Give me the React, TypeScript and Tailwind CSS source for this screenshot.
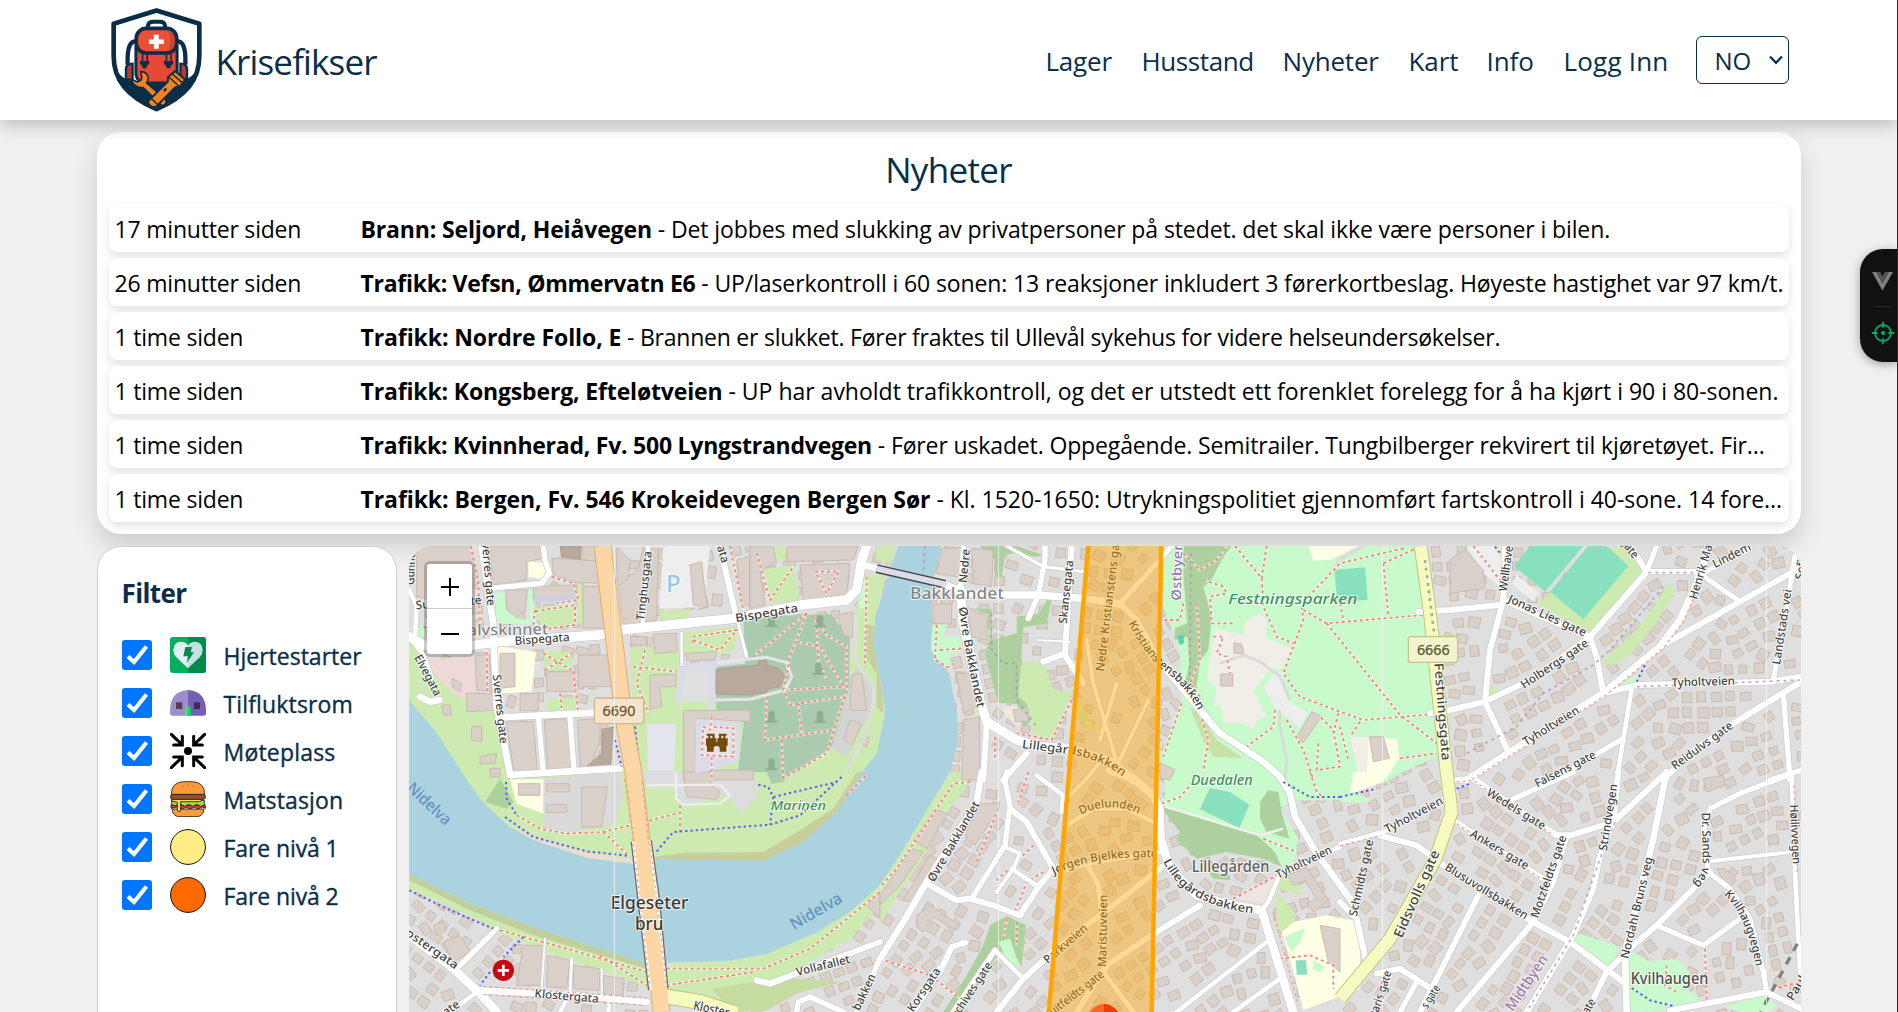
import React from "react";

/* ---------- Map data ---------- */

type Sheet = "A" | "B" | "C" | "D" | "E" | "F" | "G";

const ORIGIN: Record<Sheet, [number, number]> = {
  A: [400, 540],
  B: [750, 540],
  C: [1100, 540],
  D: [1450, 540],
  E: [400, 772],
  F: [880, 772],
  G: [1340, 772],
};

const place = (s: Sheet) => `translate(${ORIGIN[s][0]} ${ORIGIN[s][1]}) scale(0.33333)`;

const GRASS = "#cdebb0";
const PARK = "#c8facc";
const WOOD = "#add19e";
const PITCH = "#88e0be";
const YARD = "#ffffe5";
const PAVED = "#eeeeee";
const CEMETERY = "#aacbaf";
const LAND = "#e0dfdf";

const RIVER =
  "409,700 437,733 467,780 483,802 510,827 533,840 587,858 633,864 657,859 763,861 803,842 837,812 862,772 877,753 885,713 882,690 874,647 875,617 887,580 898,546 942,546 932,583 932,623 931,650 950,677 957,713 958,740 950,772 930,805 900,855 880,885 850,912 817,932 767,954 727,961 677,962 647,964 600,949 533,927 467,902 409,874";

const AREAS: [Sheet, string, string][] = [
  ["A", GRASS, "28,300 90,370 130,420 200,470 280,500 300,600 325,730 340,790 200,790 28,560"],
  ["A", "#efd9d8", "75,365 220,345 230,470 180,475 130,430"],
  ["A", PARK, "285,160 310,155 320,205 350,235 390,240 380,150 400,150 410,255 290,248"],
  ["A", GRASS, "400,205 520,190 532,250 430,268"],
  ["A", GRASS, "530,130 550,135 550,250 532,250"],
  ["A", YARD, "290,318 408,335 395,455 300,460"],
  ["A", YARD, "385,62 432,70 440,120 385,110"],
  ["A", PARK, "28,262 75,258 78,290 28,285"],
  ["A", GRASS, "430,335 515,335 515,390 435,390"],
  ["A", GRASS, "440,475 525,475 525,512 440,512"],
  ["A", PAVED, "790,18 930,18 912,200 778,206"],
  ["A", GRASS, "780,210 870,208 860,235 780,245"],
  ["A", GRASS, "690,320 735,320 750,520 745,720 720,720 700,560"],
  ["A", GRASS, "850,278 1020,255 1000,330 940,352 850,335"],
  ["A", GRASS, "740,320 850,340 840,520 820,730 740,730 745,530"],
  ["A", GRASS, "845,485 1050,485 1080,730 820,730"],
  ["A", CEMETERY, "945,380 1090,365 1090,520 950,520"],
  ["A", "#e4e4ec", "740,552 828,552 822,692 745,692"],
  ["A", "#dcdce8", "835,375 1040,350 1040,365 950,380 940,530 925,530 925,390 860,390 840,490 828,490"],
  ["B", GRASS, "345,105 410,100 375,230 372,320 395,450 405,520 380,640 330,725 60,725 130,700 240,625 330,500 300,380 320,200"],
  ["B", "#c9cf9c", "350,250 374,260 372,320 395,450 400,520 380,500 380,400 345,350"],
  ["B", "#d4d4d4", "242,620 295,440 320,380 370,450 358,525 290,650"],
  ["B", CEMETERY, "-20,235 150,225 240,222 300,290 298,440 245,620 130,705 60,725 -40,720 -10,480"],
  ["B", GRASS, "40,90 130,75 150,180 65,190"],
  ["B", GRASS, "75,18 105,18 105,60 80,65"],
  ["B", GRASS, "190,95 270,90 250,130 200,135"],
  ["B", GRASS, "375,18 435,18 425,70 380,60"],
  ["B", PARK, "335,120 355,110 350,200 325,210"],
  ["B", WOOD, "690,18 800,18 880,45 860,50 790,40 765,45 755,112 735,112 735,60"],
  ["B", WOOD, "670,205 725,208 725,300 800,280 800,230 870,220 890,180 905,180 890,250 820,262 812,370 830,470 850,540 820,560 800,490 745,490 705,340 720,300 715,225"],
  ["B", GRASS, "820,362 880,370 910,450 970,455 905,600 850,590 830,490 805,470 812,380"],
  ["B", PARK, "548,255 592,252 580,290 635,292 635,335 595,345 602,388 540,340"],
  ["B", "#efe9df", "750,505 800,500 840,520 800,560"],
  ["B", GRASS, "985,470 1035,570 1015,570 985,530"],
  ["C", PARK, "195,18 955,18 985,240 1020,600 1010,650 900,700 860,725 560,720 480,665 360,580 300,510 200,700 185,640 245,480 240,330 190,200"],
  ["C", PARK, "185,640 250,480 300,510 360,580 490,665 560,725 560,800 200,800"],
  ["C", "#c9e0a6", "268,500 310,600 340,650 430,655 350,600 300,520"],
  ["C", WOOD, "250,18 395,18 370,50 345,100 330,125 310,140 335,230 325,330 300,362 288,450 255,430 268,370 262,290 225,300 225,265 262,250 250,110"],
  ["C", "#f1eee8", "480,218 500,240 497,295 575,325 545,385 510,390 460,450 500,530 470,540 460,567 420,550 370,550 365,500 340,495 350,445 320,420 345,265 430,285 435,245"],
  ["C", PAVED, "525,398 490,440 530,510 600,562 625,520 560,480 545,400"],
  ["C", PITCH, "703,90 795,82 803,180 712,185"],
  ["C", "#55d3ac", "232,288 250,285 252,310 238,315"],
  ["C", YARD, "625,18 775,18 690,60 640,62"],
  ["C", "#f1eee8", "750,590 805,590 800,720 780,720"],
  ["C", YARD, "805,590 890,598 898,650 870,700 800,725"],
  ["D", PAVED, "50,18 160,18 150,140 100,100"],
  ["D", "#ddeecb", "130,20 150,18 155,60"],
  ["D", GRASS, "500,18 522,18 585,90 420,275 265,195 300,155"],
  ["D", PITCH, "240,18 400,18 285,155 192,78"],
  ["D", PITCH, "415,18 470,18 535,78 400,238 300,155"],
  ["D", PAVED, "200,105 268,160 250,185 185,130"],
  ["D", GRASS, "655,130 675,155 610,260 540,345 490,375 455,372 470,350 560,270 620,190"],
  ["D", GRASS, "118,430 150,455 116,470"],
  ["D", PARK, "505,432 568,402 560,428 520,438"],
  ["E", GRASS, "190,0 320,0 700,0 1385,0 1310,120 1210,210 1090,268 770,262 700,275 560,258 400,205 330,165 250,90"],
  ["E", "#c9cf9c", "760,255 850,242 1090,240 1200,175 1300,110 1370,0 1388,0 1312,130 1215,212 1092,270 770,264"],
  ["E", "#e7ddd0", "330,165 420,200 560,240 700,262 700,276 560,262 400,215"],
  ["E", WOOD, "255,90 300,20 340,90 320,110"],
  ["E", "#dadada", "430,20 660,0 670,60 645,160 530,178 430,175"],
  ["E", YARD, "330,22 430,22 430,125 350,95"],
  ["E", "#dddde0", "730,0 1060,0 1075,70 1025,125 985,70 840,100 825,45 740,45"],
  ["E", CEMETERY, "1100,0 1180,0 1150,30 1115,35"],
  ["E", GRASS, "28,305 200,390 400,465 600,530 740,573 740,645 500,560 280,478 240,445 28,352"],
  ["E", "#c3cf9a", "28,305 200,390 400,465 600,530 740,573 740,590 600,550 400,490 200,410 28,325"],
  ["E", GRASS, "830,570 980,568 1100,545 1250,480 1440,340 1440,400 1350,500 1110,640 960,720 800,680 800,590"],
  ["E", "#c5dba0", "935,650 1060,630 1190,620 1330,630 1200,660 1100,715 1000,720"],
  ["F", GRASS, "215,0 270,0 265,40 200,120 120,270 0,450 0,340 60,250 150,100"],
  ["F", WOOD, "330,460 380,432 438,460 425,585 390,520 345,560 240,720 190,720 260,610 310,520"],
  ["F", PARK, "355,510 390,500 420,590 380,560"],
  ["F", PARK, "880,0 1160,0 1195,30 1205,120 1255,200 1240,275 1210,290 1100,230 838,110"],
  ["F", PARK, "1160,0 1380,0 1380,85 1245,85 1200,30"],
  ["F", WOOD, "838,100 890,115 1000,150 1130,190 1185,240 1205,285 1150,260 1040,240 950,260 890,205 900,180"],
  ["F", WOOD, "1140,90 1165,55 1195,60 1205,120 1228,200 1160,180 1140,140"],
  ["F", PITCH, "990,48 1050,60 1108,98 1078,168 960,112"],
  ["F", WOOD, "985,300 1050,310 1050,325 1000,320"],
  ["F", GRASS, "1190,360 1250,430 1230,465 1190,480"],
  ["F", GRASS, "1195,300 1240,300 1270,370 1195,350"],
  ["F", "#eee6e0", "1070,380 1185,320 1160,395"],
  ["F", YARD, "1205,480 1240,450 1340,430 1440,450 1440,650 1270,715 1240,600"],
  ["F", PARK, "1212,495 1275,468 1262,510 1235,540"],
  ["F", PITCH, "1248,565 1278,565 1282,608 1250,608"],
  ["F", PARK, "1300,565 1335,585 1320,602 1298,590"],
  ["G", PARK, "0,0 40,0 40,50 95,90 0,90"],
  ["G", YARD, "40,0 150,0 130,30 50,60 30,60"],
  ["G", YARD, "0,440 35,470 60,590 0,650"],
  ["G", PARK, "710,482 840,525 805,600 695,510"],
  ["G", PARK, "865,530 930,570 1010,560 1050,600 1040,650 1100,700 1060,715 870,720"],
  ["G", PARK, "1150,705 1275,668 1310,700 1290,720 1200,720"],
];

const BLOCKS: [Sheet, string][] = [
  ["A", "50,18 215,18 238,130 100,180 50,170"],
  ["A", "270,18 420,18 428,55 380,65 380,120 280,135"],
  ["A", "318,150 382,150 375,212 350,232 320,210"],
  ["A", "455,55 595,62 598,130 530,128 460,105"],
  ["A", "550,18 592,18 598,62 545,60"],
  ["A", "548,140 605,138 615,265 550,265"],
  ["A", "400,140 530,135 530,165 400,175"],
  ["A", "535,345 625,345 640,440 535,440"],
  ["A", "440,395 525,395 525,455 440,455"],
  ["A", "300,340 345,340 345,440 300,445"],
  ["A", "225,345 270,345 275,455 230,450"],
  ["A", "318,545 400,545 412,695 342,695"],
  ["A", "433,540 505,535 514,690 443,695"],
  ["A", "532,540 600,535 600,600 570,690 540,685"],
  ["A", "648,18 690,60 685,130 652,135"],
  ["A", "655,140 718,80 730,18 775,18 770,240 690,255 668,250"],
  ["A", "760,282 830,280 832,335 765,340"],
  ["A", "200,460 300,460 305,510 200,515"],
  ["A", "690,290 740,290 740,315 695,315"],
  ["A", "360,460 415,460 415,512 360,512"],
  ["A", "750,405 828,402 828,440 780,440 785,500 750,508"],
  ["A", "125,495 150,495 155,525 130,525"],
  ["A", "215,560 245,560 245,605 215,600"],
  ["A", "240,650 290,640 285,670 240,672"],
  ["A", "270,685 300,685 300,712 270,710"],
  ["A", "155,415 185,430 180,455 160,445"],
  ["A", "870,75 905,65 920,200 880,195"],
  ["A", "855,340 950,335 945,360 860,362"],
  ["A", "1010,60 1050,50 1050,200 1025,190"],
  ["A", "850,512 1050,510 1050,545 890,535 885,700 960,690 1060,690 1060,720 850,720"],
  ["B", "0,18 70,18 80,70 30,90 45,195 0,205"],
  ["B", "150,75 300,70 290,165 160,180"],
  ["B", "110,18 325,18 310,60 110,65"],
  ["B", "262,225 310,215 308,292 280,285"],
  ["B", "305,405 335,400 350,512 300,510"],
  ["B", "300,540 335,552 308,615 280,600"],
  ["B", "340,590 358,595 350,620 330,612"],
  ["B", "550,195 605,190 605,252 548,250"],
  ["B", "575,25 640,22 632,112 558,100"],
  ["B", "640,540 688,530 690,720 635,720"],
  ["B", "620,400 665,400 680,500 640,520"],
  ["B", "665,25 730,30 725,140 670,130"],
  ["B", "650,200 715,230 710,300 665,290"],
  ["B", "790,508 835,505 835,545 795,545"],
  ["C", "635,515 665,530 610,608 590,592"],
  ["C", "808,590 850,590 868,655 820,665"],
  ["C", "362,402 398,402 398,438 362,438"],
  ["C", "402,308 425,312 432,340 402,340"],
  ["C", "180,668 225,690 210,720 180,715"],
  ["D", "0,60 45,30 100,90 105,145 0,160"],
  ["E", "545,45 622,45 605,165 545,165"],
  ["E", "355,35 420,35 420,70 355,70"],
  ["E", "440,35 508,35 508,60 440,60"],
  ["E", "440,97 500,97 500,122 440,122"],
  ["E", "850,0 930,0 935,40 960,60 950,82 860,75"],
  ["E", "100,460 130,450 140,475 110,490"],
  ["E", "130,510 180,490 212,540 160,570"],
  ["E", "370,520 430,520 430,640 350,640"],
  ["E", "442,550 510,565 500,650 440,645"],
  ["E", "520,580 600,590 598,655 520,650"],
  ["E", "610,610 672,620 668,672 610,665"],
  ["E", "1400,400 1440,360 1440,440"],
  ["F", "165,112 202,125 140,230 100,205"],
  ["F", "95,230 130,240 60,340 20,380 0,400 0,370"],
  ["F", "150,250 175,262 95,390 70,385"],
  ["F", "255,190 300,95 356,95 356,112 285,220"],
  ["F", "110,430 150,400 240,460 230,475 160,435 130,480 110,465"],
  ["F", "1225,310 1280,285 1345,385 1300,420 1280,395 1310,380 1275,325 1240,340"],
  ["F", "1320,460 1380,470 1380,600 1345,570"],
  ["G", "1130,290 1155,290 1190,325 1165,350"],
  ["G", "1090,20 1150,10 1155,40 1100,60"],
];

const DARK_BLOCKS: [Sheet, string][] = [
  ["A", "480,18 545,18 540,58 485,50"],
  ["A", "605,570 640,560 632,685 560,680 605,640"],
  ["A", "948,388 1075,375 1075,362 1100,362 1100,375 1135,385 1158,410 1140,440 1100,448 1100,460 1075,460 1050,465 948,462"],
];

const ROADS: [Sheet, string, number][] = [
  ["A", "245,18 262,140 280,250 282,330 290,500 318,640 330,705 660,685", 20],
  ["A", "270,145 425,130 448,100 435,60 430,18", 16],
  ["A", "28,150 50,200 45,290", 14],
  ["A", "28,290 60,330 70,345 100,430", 14],
  ["A", "60,470 90,485 118,480", 20],
  ["A", "305,532 590,518", 20],
  ["A", "415,530 430,700", 16],
  ["A", "510,530 522,690", 16],
  ["A", "960,18 1005,215", 18],
  ["A", "745,18 728,245", 12],
  ["A", "645,18 645,18 790,18", 4],
  ["A", "845,375 845,280", 8],
  ["A", "1005,215 1040,350", 10],
  ["A", "28,290 70,315 150,325 300,305 600,285 660,270 1000,235 1200,195 1340,180 1370,150 1385,60 1400,18", 28],
  ["B", "340,75 390,88", 20],
  ["B", "590,135 640,160 760,165 860,165 1000,175 1060,185 1110,192", 22],
  ["B", "630,145 640,250 690,480 710,545 800,600 860,620 960,625 1080,665 1150,720", 28],
  ["B", "710,545 700,720", 18],
  ["B", "885,20 885,60 865,165 835,235", 16],
  ["B", "965,18 945,340 880,365", 18],
  ["B", "945,345 1000,430", 18],
  ["B", "830,640 760,720", 18],
  ["B", "640,18 632,140", 14],
  ["B", "770,18 880,80 1000,95", 10],
  ["B", "860,300 960,305", 6],
  ["F", "305,0 290,90 140,330 70,450 0,560", 20],
  ["F", "380,0 375,30 390,100 375,220 275,380", 16],
  ["F", "390,110 440,150 520,290 475,345 420,430 340,400 270,380 230,385 150,340", 18],
  ["F", "395,290 475,345", 14],
  ["F", "375,225 420,245 400,290 350,360", 12],
  ["F", "470,10 550,70 545,120", 14],
  ["F", "350,720 430,620 540,520 700,400 845,285", 18],
  ["F", "590,720 680,580 830,480 960,400", 18],
  ["F", "670,600 760,720", 16],
  ["F", "620,275 655,340 668,460 670,600", 16],
  ["F", "540,300 620,275 840,240", 14],
  ["F", "560,160 640,110 740,110 820,150", 14],
  ["F", "560,80 620,20 660,-30", 12],
  ["F", "690,-5 760,20 820,70 838,110 842,200 870,290 950,370 1060,400 1145,415 1165,480 1240,720", 26],
  ["F", "1380,225 1200,305 1165,390 1145,415", 14],
  ["F", "180,600 215,525 255,512", 18],
  ["F", "100,720 180,590", 18],
  ["F", "345,535 430,620", 14],
  ["F", "345,535 220,720", 16],
  ["F", "890,720 1160,510", 14],
  ["F", "1060,720 1200,620", 14],
  ["C", "300,510 360,580 490,665 540,710 570,760 585,830 650,940 760,1090", 20],
  ["C", "-110,170 0,180 60,190 110,240 190,380 300,510", 18],
  ["C", "60,190 170,70 215,18", 16],
  ["C", "-40,300 -20,430 60,700", 12],
  ["C", "50,430 0,600", 12],
  ["C", "145,480 50,680", 12],
  ["E", "-10,470 28,490 160,590 240,665 290,720", 26],
  ["E", "240,655 500,668 740,690", 20],
  ["E", "180,580 290,470", 16],
  ["E", "150,720 230,660", 14],
  ["E", "510,665 480,720", 12],
  ["E", "630,680 625,720", 12],
  ["E", "1070,625 1110,635 1200,600 1440,510", 18],
  ["E", "1190,720 1195,690 1230,675 1330,720", 16],
  ["E", "1440,560 1370,720", 16],
  ["E", "435,500 425,650", 6],
  ["E", "515,560 510,660", 8],
  ["E", "605,590 605,665", 6],
  ["G", "0,390 50,440 80,575", 18],
  ["G", "0,215 130,180 320,75", 14],
  ["G", "110,188 230,220 310,280 580,450 690,510 850,630", 18],
  ["G", "350,25 400,20 650,190 690,190 820,150 980,0", 18],
  ["G", "500,90 700,0", 16],
  ["G", "350,150 610,320", 16],
  ["G", "835,0 820,150 780,250 760,350 700,490 560,720", 18],
  ["G", "980,0 940,200 855,540 860,720", 20],
  ["G", "680,190 640,330 580,450 350,720", 18],
  ["G", "415,370 270,660 240,720", 18],
  ["G", "110,605 180,590 280,655", 18],
  ["G", "230,630 180,720", 16],
  ["G", "740,720 800,600 880,520 950,460 1090,320 1110,300", 18],
  ["G", "1345,10 1210,60 1110,110 1090,180 1105,300 1170,350 1230,440 1270,600 1280,660", 16],
  ["G", "950,460 1090,520 1200,440", 16],
  ["G", "1110,268 1370,238", 12],
  ["G", "1355,0 1365,300 1380,600", 14],
  ["G", "990,715 1280,660 1383,710", 18],
  ["D", "-95,215 0,210 150,195", 18],
  ["D", "-60,520 0,510 105,485 250,415 420,290", 18],
  ["D", "165,18 160,180 120,330 105,485 175,635", 18],
  ["D", "160,180 240,215 420,290 590,95 540,18", 18],
  ["D", "420,290 440,350 460,460", 18],
  ["D", "620,18 590,95 740,95 870,185", 16],
  ["D", "740,110 900,25", 14],
  ["D", "780,18 740,130 690,240 630,320 460,460 300,560 175,640 50,720", 22],
  ["D", "630,320 870,185 1030,95 1060,80", 18],
  ["D", "460,460 560,435 960,425 1055,410", 18],
  ["D", "1035,50 1010,200 970,420", 16],
  ["D", "640,720 720,640 850,550 1055,425", 18],
  ["D", "545,445 500,720", 14],
  ["D", "310,720 520,595", 16],
  ["D", "1000,460 1020,720", 16],
  ["D", "960,720 1055,690", 16],
];

const MAIN_ROADS: [Sheet, string, number, string, string][] = [
  ["C", "962,18 990,220 1025,560 1040,696 1055,816 1005,960 870,1196 720,1376", 36, "#f7fabf", "#b9bd74"],
  ["E", "780,670 900,690 1010,725", 42, "#f7fabf", "#b9bd74"],
  ["A", "608,18 640,280 675,560 700,696 725,896 760,1196 785,1416", 48, "#fcd6a4", "#d9a766"],
];

const FOOTPATHS: [Sheet, string][] = [
  ["A", "212,18 235,130 240,240 260,320 262,460"],
  ["A", "405,210 400,250 430,268 525,255 525,195 400,215"],
  ["A", "455,110 520,130 535,180 470,190"],
  ["A", "430,340 515,390 M435,390 515,340"],
  ["A", "70,260 220,320 600,298"],
  ["A", "480,460 485,510"],
  ["A", "520,395 535,520"],
  ["A", "735,330 710,430 745,520"],
  ["A", "700,380 830,395"],
  ["A", "880,300 960,330 1010,270 880,290 880,320"],
  ["A", "990,18 1030,210"],
  ["A", "935,530 930,570 910,560 905,645 1000,650 1000,565 935,560"],
  ["A", "935,650 935,720"],
  ["B", "170,220 10,350"],
  ["B", "170,220 120,350 100,450 120,495 280,470"],
  ["B", "190,230 230,285 290,320 290,450 230,640 100,715"],
  ["B", "140,305 210,320 280,440 110,450"],
  ["B", "50,470 45,600 250,570"],
  ["B", "145,490 155,580 M95,600 100,720"],
  ["B", "200,240 205,360 230,420"],
  ["B", "350,110 345,370"],
  ["B", "20,40 60,180 130,80"],
  ["B", "195,95 265,95 230,160 195,95"],
  ["B", "560,255 555,360 600,385 M570,330 640,325"],
  ["B", "735,590 735,660"],
  ["B", "965,480 905,600 800,580"],
  ["C", "405,18 485,115 490,200 530,290 580,310"],
  ["C", "500,18 485,115"],
  ["C", "910,25 720,70 630,165 M605,200 610,240 550,400 600,470 720,515 790,540 1030,520"],
  ["C", "610,210 680,250 970,225"],
  ["C", "680,250 800,400 900,525 1010,610"],
  ["C", "850,70 865,225 M850,70 960,20"],
  ["C", "720,190 730,240"],
  ["C", "250,40 300,90 350,60 380,20"],
  ["C", "310,120 370,140 380,160 330,170 335,250 400,250"],
  ["C", "250,190 240,240 195,240"],
  ["C", "290,190 300,360 270,430 300,470"],
  ["C", "340,290 370,290 350,340 380,350 390,400"],
  ["C", "245,490 190,650"],
  ["C", "300,520 325,600 310,690"],
  ["C", "525,510 520,560 440,620"],
  ["C", "560,540 610,630 640,720"],
  ["C", "655,610 650,690 720,680 700,570 660,530"],
  ["C", "715,520 700,580 M720,560 745,660 M780,545 750,590"],
  ["C", "900,655 1010,640"],
  ["D", "70,18 150,120"],
  ["E", "350,130 420,170 500,185 610,180 830,125"],
  ["E", "610,180 690,255"],
  ["E", "300,475 500,530 740,600"],
  ["E", "600,550 740,640"],
  ["E", "800,590 1090,590 1230,530 1440,360"],
  ["E", "800,640 1060,600"],
  ["E", "840,100 840,180"],
  ["E", "1340,70 1400,10"],
  ["F", "270,30 220,35 110,200 50,290 0,345"],
  ["F", "445,0 415,90"],
  ["F", "355,110 290,270"],
  ["F", "460,220 345,330 M490,300 440,330 400,430"],
  ["F", "380,440 370,500 M410,450 410,520"],
  ["F", "0,560 150,610 240,680"],
  ["F", "1060,380 1190,310"],
  ["F", "845,95 900,75 940,30"],
  ["F", "1150,200 1250,240"],
  ["F", "1200,560 1290,550 1360,580 1360,650"],
  ["F", "1290,0 1310,60 1330,75"],
  ["G", "1280,655 1380,630"],
  ["G", "980,580 975,640 1010,660"],
  ["G", "1095,530 1100,690 1280,652"],
];

const CYCLEPATHS: [Sheet, string][] = [
  ["E", "318,30 320,80 350,130 M315,135 400,195 560,238 690,252"],
  ["E", "770,238 820,180 1110,158 1200,130 1330,10"],
  ["E", "1075,38 1105,45 1120,75 1110,158 M1120,75 1310,30"],
  ["E", "28,355 140,410 280,470"],
  ["E", "370,495 310,555 M270,600 240,640"],
  ["A", "645,600 665,680 M705,560 720,700"],
  ["F", "1210,30 1290,75 1380,75"],
  ["G", "0,75 110,50 M350,50 390,35"],
  ["G", "875,648 930,685 1000,702"],
  ["D", "560,425 585,375 M135,20 155,45"],
];

const TRACKS: [Sheet, string][] = [
  ["D", "640,140 480,330 430,375 280,460 200,560 50,640"],
  ["D", "595,98 740,98"],
  ["D", "560,440 1050,420"],
  ["G", "825,150 780,260 700,490 560,720"],
  ["B", "525,18 520,90"],
  ["B", "725,220 725,330 760,370 800,370 800,480 860,560"],
  ["C", "272,40 270,420"],
];

/* ---------- Houses placed along the residential streets ---------- */

type Pt = [number, number];

const toPoints = (s: Sheet, pts: string): Pt[] =>
  pts.split(" ").map((p) => {
    const [x, y] = p.split(",").map(Number);
    return [ORIGIN[s][0] + x / 3, ORIGIN[s][1] + y / 3];
  });

const SEGMENTS: [Pt, Pt, number][] = [];
[...ROADS, ...MAIN_ROADS].forEach(([s, pts, w]) => {
  const p = toPoints(s, pts);
  for (let i = 1; i < p.length; i++) SEGMENTS.push([p[i - 1], p[i], w / 6]);
});

const distance = (x: number, y: number, a: Pt, b: Pt) => {
  const dx = b[0] - a[0];
  const dy = b[1] - a[1];
  const l = dx * dx + dy * dy || 1;
  const t = Math.max(0, Math.min(1, ((x - a[0]) * dx + (y - a[1]) * dy) / l));
  return Math.hypot(x - a[0] - t * dx, y - a[1] - t * dy);
};

const noise = (n: number) => {
  const v = Math.sin(n * 127.1 + 11.7) * 43758.5453;
  return v - Math.floor(v);
};

interface House {
  x: number;
  y: number;
  a: number;
  w: number;
  h: number;
}

const HOUSES: House[] = [];
SEGMENTS.forEach(([a, b], si) => {
  const len = Math.hypot(b[0] - a[0], b[1] - a[1]);
  if (len < 6) return;
  const ux = (b[0] - a[0]) / len;
  const uy = (b[1] - a[1]) / len;
  const angle = (Math.atan2(uy, ux) * 180) / Math.PI;
  [-1, 1].forEach((side) => {
    [13, 28, 43].forEach((off, row) => {
      for (let t = 5; t < len; t += 14.5) {
        const k = noise(si * 31 + side * 7 + row * 3 + t);
        const x = a[0] + ux * (t + k * 4) - uy * side * (off + k * 2);
        const y = a[1] + uy * (t + k * 4) + ux * side * (off + k * 2);
        if (x < 405 || x > 1805 || y < 542 || y > 1016) continue;
        if (SEGMENTS.some(([p, q, w]) => distance(x, y, p, q) < w + 7)) continue;
        if (HOUSES.some((o) => Math.hypot(o.x - x, o.y - y) < 13)) continue;
        HOUSES.push({ x, y, a: angle + (k > 0.8 ? 18 : 0), w: 8 + k * 4, h: 7.5 + noise(t + si) * 3 });
      }
    });
  });
});

/* ---------- Labels: baseline start and end ---------- */

const STREET = "#444444";
const LABELS: [Sheet, string, number, number, number, number, number?, string?, boolean?][] = [
  ["A", "Bispegata", 345, 315, 510, 303],
  ["A", "Kalvskinnet", 172, 287, 445, 283, 46, "#858585"],
  ["A", "Tinghusgata", 733, 242, 755, 35],
  ["A", "Sverres gate", 244, -10, 262, 198],
  ["A", "Sverres gate", 278, 405, 300, 612],
  ["A", "Elvegata", 42, 352, 105, 470],
  ["A", "Suhms gate", 48, 208, 245, 192],
  ["A", "Gunnerus", 42, 135, 48, -10],
  ["A", "P", 798, 155, 842, 155, 72, "#8fcbe9"],
  ["A", "gata", 945, 0, 965, 70],
  ["A", "Bispegata", 1008, 247, 1195, 215],
  ["B", "Bakklandet", 480, 178, 762, 178, 50, "#858585"],
  ["B", "Nedre", 650, 130, 660, 28],
  ["B", "Skansegata", 950, 252, 970, 62],
  ["C", "Nedre Kristianstens gate", 12, 395, 62, -20],
  ["C", "Østbyen", 242, 182, 248, 5, 40, "#9b78ac"],
  ["C", "Festningsparken", 385, 192, 772, 192, 45, "#43925b", true],
  ["C", "Festningsgata", 1003, 370, 1026, 662, 38],
  ["D", "Wellhaven", 170, 155, 192, 0],
  ["D", "Jonas Lies gate", 172, 185, 402, 290],
  ["D", "Holbergs gate", 222, 447, 418, 315],
  ["D", "Tyholtveien", 228, 618, 390, 517],
  ["D", "Tyholtveien", 665, 440, 855, 434],
  ["D", "Henrik Ma", 740, 180, 788, 18],
  ["D", "Lindem", 795, 85, 905, 28],
  ["D", "Landstads vei", 990, 375, 1025, 150],
  ["D", "Reidulvs gate", 675, 690, 852, 562],
  ["D", "Falsens gate", 262, 743, 440, 652],
  ["D", "gate", 510, 5, 550, 58],
  ["D", "Sofi", 1060, 120, 1068, 60],
  ["E", "Nidelva", 18, 52, 135, 162, 48, "#6590c2"],
  ["E", "Marinen", 1112, 114, 1278, 114, 40, "#43925b", true],
  ["E", "Elgeseter", 632, 410, 865, 410, 52, "#383838"],
  ["E", "bru", 705, 474, 790, 474, 52, "#383838"],
  ["E", "Nidelva", 1182, 475, 1330, 388, 48, "#6590c2"],
  ["E", "Vollafallet", 1192, 612, 1352, 572],
  ["E", "Klostergata", 403, 676, 595, 692],
  ["E", "Klostergata", -15, 468, 165, 592],
  ["E", "Kloster", 878, 712, 985, 735, 38],
  ["E", "bakken", 1378, 718, 1428, 612],
  ["E", "gate", 120, 745, 182, 702],
  ["F", "Øvre Bakklandet", 162, 332, 300, 97],
  ["F", "Duedalen", 932, 38, 1118, 38, 42, "#43925b", true],
  ["F", "Lillegården", 935, 300, 1168, 300, 46, "#606060"],
  ["F", "Tyholtveien", 1195, 320, 1358, 242],
  ["F", "Parkveien", 503, 577, 625, 472],
  ["F", "Maristuveien", 678, 585, 682, 368],
  ["F", "Huitfeldts gate", 500, 745, 675, 612],
  ["F", "Korsgata", 100, 722, 183, 597],
  ["F", "Archives gate", 222, 755, 338, 580],
  ["G", "Schmidts gate", 50, 435, 100, 205],
  ["G", "Tyholtveien", 142, 184, 312, 94],
  ["G", "Wedels gate", 437, 68, 608, 174],
  ["G", "Ankers gate", 388, 192, 558, 294],
  ["G", "Blusuvollsbakken", 312, 292, 556, 444],
  ["G", "Eidsvolls gate", 185, 500, 300, 242, 40],
  ["G", "Motzfeldts gate", 594, 440, 680, 195],
  ["G", "Strindvegen", 800, 238, 832, 38],
  ["G", "Nordahl Bruns veg", 865, 562, 938, 258],
  ["G", "Høilivvegen", 1350, 98, 1358, 277],
  ["G", "Midtbyen", 518, 720, 625, 562, 44, "#9b78ac"],
  ["G", "Kvilhaugen", 872, 637, 1105, 637, 46, "#505050"],
  ["G", "s gate", 262, 712, 302, 648],
  ["G", "Paris gate", 110, 740, 155, 600],
  ["G", "gate", 735, 745, 768, 688],
  ["G", "Paul", 1358, 688, 1400, 620],
];

const CURVED: [Sheet, string, string, number][] = [
  ["B", "Øvre Bakklandet", "M626,202 Q638,300 682,505", 308],
  ["B", "Lillegårdsbakken", "M815,624 L960,642 Q1060,660 1122,714", 320],
  ["C", "Kristianstensbakken", "M85,250 Q130,340 190,390 Q260,440 296,515", 338],
  ["F", "Duelunden", "M602,128 Q690,85 775,125", 180],
  ["F", "Jørgen Bjelkes gate", "M522,308 Q640,250 835,256", 318],
  ["F", "Lillegårdsbakken", "M850,268 Q910,400 1125,425", 325],
  ["G", "Dr. Sands veg", "M1085,122 Q1088,230 1088,280 Q1085,310 1060,335", 222],
  ["G", "Kvilhaugvegen", "M1152,368 Q1220,430 1248,585", 240],
];

const Poly = ({ s, pts, ...rest }: { s: Sheet; pts: string } & React.SVGProps<SVGPolygonElement>) => (
  <polygon points={pts} transform={place(s)} {...rest} />
);

const Line = ({ s, pts, ...rest }: { s: Sheet; pts: string } & React.SVGProps<SVGPathElement>) => (
  <path d={pts.startsWith("M") ? pts : `M${pts}`} transform={place(s)} fill="none" strokeLinejoin="round" {...rest} />
);

const Castle = () => (
  <path
    transform={place("A")}
    fill="#734a08"
    d="M918,595h7v-8h6v8h6v-8h7v8h5v12h3v-12h5v-8h7v8h6v-8h6v8h7v22h-4v18h-20v-10q0-7-9-7t-9,7v10h-20v-18h-3z M920,581h24v6h-24z M956,581h24v6h-24z"
  />
);

const CityMap = () => (
  <svg viewBox="409 546 1392 466" className="block h-[466px] w-full" preserveAspectRatio="none" fontFamily="'Noto Sans','Open Sans',sans-serif">
    <rect x="409" y="546" width="1392" height="466" fill={LAND} />
    <g fill="#d9d0c9" stroke="#c5b6aa" strokeWidth="0.8">
      {HOUSES.map((h, i) => (
        <rect key={i} x={-h.w / 2} y={-h.h / 2} width={h.w} height={h.h} transform={`translate(${h.x.toFixed(1)} ${h.y.toFixed(1)}) rotate(${h.a.toFixed(0)})`} />
      ))}
    </g>
    {AREAS.map(([s, fill, pts], i) => (
      <Poly key={i} s={s} pts={pts} fill={fill} />
    ))}
    <polygon points={RIVER} fill="#aad3df" />
    {BLOCKS.map(([s, pts], i) => (
      <Poly key={i} s={s} pts={pts} fill="#d9d0c9" stroke="#c5b6aa" strokeWidth="2.6" />
    ))}
    {DARK_BLOCKS.map(([s, pts], i) => (
      <Poly key={i} s={s} pts={pts} fill="#b9a99c" stroke="#a8978a" strokeWidth="2.4" />
    ))}
    <Poly s="A" pts="888,537 1022,545 1018,660 945,690 885,700" fill="#dcdce8" />
    <Poly s="A" pts="912,568 990,568 990,645 912,645" fill="#e9e3e3" />
    <Poly s="A" pts="400,172 530,162 532,182 400,190" fill="#cfcfe0" />
    <Line s="A" pts="948,368 1100,352 1160,368 1175,410 1155,450 1050,478 948,480" stroke="#e6e6e6" strokeWidth="9" />
    <Line s="B" pts="315,200 318,370 370,430 372,490 340,600 290,690" stroke="#dedede" strokeWidth="9" />
    <Line s="C" pts="360,370 430,345 480,365 540,410 570,480 M538,510 540,560 560,660 555,720" stroke="#d9d9d9" strokeWidth="8" />
    <Line s="C" pts="705,90 715,60 790,18" stroke="#dcdcdc" strokeWidth="12" />
    <Line s="F" pts="838,98 1140,190 1210,170" stroke="#efefef" strokeWidth="8" />
    <Line s="E" pts="740,40 960,38 990,70 960,95 850,98 828,80 828,0" stroke="#eeeeee" strokeWidth="7" />

    {FOOTPATHS.map(([s, pts], i) => (
      <Line key={i} s={s} pts={pts} stroke="#ffffff" strokeOpacity="0.45" strokeWidth="9" />
    ))}
    {FOOTPATHS.map(([s, pts], i) => (
      <Line key={i} s={s} pts={pts} stroke="#f98579" strokeWidth="5.5" strokeDasharray="9 9" />
    ))}

    {ROADS.map(([s, pts, w], i) => (
      <Line key={i} s={s} pts={pts} stroke="#cbc9c8" strokeWidth={w + 4} strokeLinecap="round" />
    ))}
    {ROADS.map(([s, pts, w], i) => (
      <Line key={i} s={s} pts={pts} stroke="#ffffff" strokeWidth={w} strokeLinecap="round" />
    ))}
    <Line s="D" pts="790,25 750,135 700,245 640,325 468,465 308,568 60,722" stroke="#f7a29a" strokeWidth="4" strokeDasharray="9 9" />
    <Line s="G" pts="350,30 400,25 640,190 M350,155 605,322 M1362,40 1372,300 M0,222 125,190" stroke="#f7a29a" strokeWidth="4" strokeDasharray="9 9" />
    <Line s="E" pts="250,643 740,678 M250,668 735,700" stroke="#f7a29a" strokeWidth="4" strokeDasharray="9 9" />
    <Line s="F" pts="1180,420 1255,700" stroke="#f7a29a" strokeWidth="4" strokeDasharray="9 9" />
    {TRACKS.map(([s, pts], i) => (
      <Line key={i} s={s} pts={pts} stroke="#a58fb0" strokeOpacity="0.75" strokeWidth="5" strokeDasharray="9 12" />
    ))}
    {CYCLEPATHS.map(([s, pts], i) => (
      <Line key={i} s={s} pts={pts} stroke="#5b5bff" strokeWidth="6" strokeDasharray="7 9" />
    ))}
    {MAIN_ROADS.map(([s, pts, w, , edge], i) => (
      <Line key={i} s={s} pts={pts} stroke={edge} strokeWidth={w + 5} />
    ))}
    {MAIN_ROADS.map(([s, pts, w, fill], i) => (
      <Line key={i} s={s} pts={pts} stroke={fill} strokeWidth={w} />
    ))}
    <Line s="C" pts="975,60 990,180 1005,300" stroke="#a9a9a9" strokeWidth="8" strokeDasharray="9 14" />
    <Line s="E" pts="675,20 700,200 720,400 745,640 M728,30 745,200 770,350 790,520" stroke="#f3a08c" strokeWidth="5" strokeDasharray="9 9" />
    <Line s="E" pts="698,210 722,420 750,655 M752,208 772,380 802,640" stroke="#ffffff" strokeWidth="10" />
    <Line s="E" pts="700,215 724,420 750,650 M750,215 770,380 800,640" stroke="#f5a38f" strokeWidth="4" strokeDasharray="8 10" />
    <Line s="E" pts="694,210 718,420 746,655 M754,206 778,380 804,648" stroke="#6b6b6b" strokeWidth="4" />
    <Line s="B" pts="380,86 585,133" stroke="#454545" strokeWidth="26" />
    <Line s="B" pts="380,86 590,134" stroke="#dedbe8" strokeWidth="18" />
    <Line s="G" pts="1372,515 1262,720" stroke="#808080" strokeWidth="10" strokeDasharray="24 22" />
    <Castle />
    <g fill="#8ab290">
      {[[65, 245], [210, 245], [65, 532], [210, 532], [205, 388], [65, 675]].map(([x, y], i) => (
        <path key={i} transform={place("B")} d={`M${x - 10},${y + 10}v-20q0-10 10-10t10,10v20h8v6h-36v-6z`} />
      ))}
    </g>
    <g transform={place("E")}>
      <circle cx="310" cy="595" r="32" fill="#c30a12" />
      <path d="M310,578v34M293,595h34" stroke="#fff" strokeWidth="8" />
    </g>

    {LABELS.map(([s, text, x1, y1, x2, y2, size = 35, color = STREET, italic], i) => (
      <text
        key={i}
        transform={`${place(s)} translate(${x1} ${y1}) rotate(${((Math.atan2(y2 - y1, x2 - x1) * 180) / Math.PI).toFixed(1)})`}
        textLength={Math.hypot(x2 - x1, y2 - y1).toFixed(0)}
        lengthAdjust="spacingAndGlyphs"
        fontSize={size}
        fontWeight="500"
        fontStyle={italic ? "italic" : "normal"}
        fill={color}
        stroke="#ffffff"
        strokeOpacity="0.75"
        strokeWidth={color === "#6590c2" ? 0 : 6}
        strokeLinejoin="round"
        paintOrder="stroke"
      >
        {text}
      </text>
    ))}
    {CURVED.map(([s, text, d, len], i) => (
      <g key={i} transform={place(s)}>
        <path id={`street-${i}`} d={d} fill="none" />
        <text fontSize="35" fontWeight="500" fill={STREET} stroke="#ffffff" strokeOpacity="0.75" strokeWidth="6" strokeLinejoin="round" paintOrder="stroke">
          <textPath href={`#street-${i}`} textLength={len} lengthAdjust="spacingAndGlyphs">
            {text}
          </textPath>
        </text>
      </g>
    ))}
    <g transform={place("A")}>
      <rect x="583" y="474" width="148" height="77" rx="8" fill="#f5e3cc" stroke="#d8b48a" strokeWidth="4" />
      <text x="657" y="528" textAnchor="middle" fontSize="43" fill="#6d5531" stroke="#6d5531" strokeWidth="0.8">6690</text>
    </g>
    <g transform={place("C")}>
      <rect x="925" y="290" width="148" height="77" rx="8" fill="#f3f3cf" stroke="#c3c68c" strokeWidth="4" />
      <text x="1000" y="344" textAnchor="middle" fontSize="43" fill="#58592e" stroke="#58592e" strokeWidth="0.8">6666</text>
    </g>

    <g fill="#ffffff" fillOpacity="0.6">
      <rect x="614" y="546" width="1" height="466" />
      <rect x="998" y="546" width="1" height="466" />
      <rect x="1382" y="546" width="1" height="466" />
      <rect x="1766" y="546" width="1" height="466" />
    </g>

    <path d="M1089,536 L1048,1022 L1151.5,1022 L1161.5,536 Z" fill="#ffa500" fillOpacity="0.42" stroke="#ffa500" strokeWidth="4.5" />
    <path d="M1104,1004a16,16 0 0 0 -16,16h16z" fill="#ff6422" />
    <path d="M1104,1004a16,16 0 0 1 16,16h-16z" fill="#f03a02" />
  </svg>
);

/* ---------- Brand ---------- */

const Logo = () => (
  <svg viewBox="60 22 280 318" className="h-[106px] w-[93px] shrink-0">
    <path d="M200,32 L329,72 V168 C329,240 290,290 200,329 C110,290 71,240 71,168 V72 Z" fill="#fff" stroke="#0b2e48" strokeWidth="14" strokeLinejoin="round" />
    <path d="M74,205 Q95,240 130,245 H270 Q305,240 326,205 Q305,290 200,329 Q95,290 74,205Z" fill="#0b2e48" />
    <path d="M174,88 V78 Q176,66 190,66 H210 Q224,66 226,78 V88" fill="none" stroke="#0b2e48" strokeWidth="12" />
    <path d="M138,124 Q112,124 113,185 V195 M262,124 Q288,124 287,185 V195" fill="none" stroke="#0b2e48" strokeWidth="13" />
    <path d="M108,240 V210 Q108,192 128,192 V240Z M292,240 V210 Q292,192 272,192 V240Z" fill="#b83a30" stroke="#0b2e48" strokeWidth="7" />
    <path d="M138,140 H262 V225 Q258,250 230,250 H170 Q142,250 138,225Z" fill="#e64a35" stroke="#0b2e48" strokeWidth="9" />
    <path d="M158,160V190M172,160V190M230,160V190M244,160V190" stroke="#0b2e48" strokeWidth="5" />
    <path d="M150,184h28v8l-8,8v6h-12v-6l-8-8zM222,184h28v8l-8,8v6h-12v-6l-8-8z" fill="#0b2e48" />
    <rect x="139" y="86" width="122" height="74" rx="30" fill="#ec4f37" stroke="#0b2e48" strokeWidth="11" />
    <path d="M236,93 Q255,98 255,122 Q255,148 236,153 Q246,122 236,93Z" fill="#cf4030" />
    <path d="M192,105h15v14h15v14h-15v14h-15v-14h-15v-14h15z" fill="#fff" />
    <path d="M152,216 C174,216 180,236 170,250 L228,300 Q232,316 216,318 L160,264 C140,266 126,254 124,238 L142,247 L154,241 L156,231Z" fill="#f5821f" stroke="#0b2e48" strokeWidth="5" strokeLinejoin="round" />
    <path d="M174,306 L234,246 L235,232 L256,214 L286,240 L271,260 L256,264 L198,322 Q178,326 174,306Z" fill="#f5821f" stroke="#0b2e48" strokeWidth="6" strokeLinejoin="round" />
    <path d="M238,233 L268,260 M248,223 L278,250 M184,296 L204,316" stroke="#0b2e48" strokeWidth="4.5" />
    <ellipse cx="226" cy="271" rx="6" ry="4" transform="rotate(-45 226 271)" fill="#0b2e48" />
  </svg>
);

const NAV: { label: string; style: string }[] = [
  { label: "Lager", style: "w-[66px] tracking-[-0.2px]" },
  { label: "Husstand", style: "w-[111px] tracking-[-0.4px]" },
  { label: "Nyheter", style: "w-[96px] tracking-[-0.2px]" },
  { label: "Kart", style: "w-[48px] tracking-[-0.1px]" },
  { label: "Info", style: "w-[47px] tracking-[-0.1px]" },
  { label: "Logg Inn", style: "w-[105px] tracking-[0.2px]" },
];

const Header = () => (
  <header className="relative z-10 h-[120px] bg-white shadow-[0_6px_16px_rgba(0,0,0,0.2)]">
    <div className="mx-auto flex h-full w-[1704px] items-center justify-between pr-3 pl-[13px] text-[#0b2e48]">
      <div className="flex items-center gap-[13px]">
        <Logo />
        <span className="pt-[2px] text-[35px] leading-none tracking-[-0.85px]">Krisefikser</span>
      </div>
      <nav className="flex items-center gap-[30px] text-[26px]">
        {NAV.map((n) => (
          <a key={n.label} className={`${n.style} pt-[2px] whitespace-nowrap`}>
            {n.label}
          </a>
        ))}
        <button className="-ml-[3px] flex h-[48px] w-[93px] items-center justify-between rounded-[6px] border border-[#0b2e48] bg-white pt-[2px] pr-[5px] pl-[18px] text-[24px]">
          NO
          <svg viewBox="0 0 14 10" className="-mt-[3px] h-[10px] w-[14px]" fill="none" stroke="#0b2e48" strokeWidth="2.2">
            <path d="M1,1.5 L7,7.8 L13,1.5" />
          </svg>
        </button>
      </nav>
    </div>
  </header>
);

/* ---------- News ---------- */

const NEWS = [
  {
    time: "17 minutter siden",
    title: "Brann: Seljord, Heiåvegen",
    text: "Det jobbes med slukking av privatpersoner på stedet. det skal ikke være personer i bilen.",
    bold: "tracking-[-0.15px]",
    body: "tracking-[-0.1px]",
  },
  {
    time: "26 minutter siden",
    title: "Trafikk: Vefsn, Ømmervatn E6",
    text: "UP/laserkontroll i 60 sonen: 13 reaksjoner inkludert 3 førerkortbeslag. Høyeste hastighet var 97 km/t.",
    bold: "tracking-[-0.28px]",
    body: "tracking-[-0.115px]",
  },
  {
    time: "1 time siden",
    title: "Trafikk: Nordre Follo, E",
    text: "Brannen er slukket. Fører fraktes til Ullevål sykehus for videre helseundersøkelser.",
    bold: "tracking-[-0.1px]",
    body: "tracking-[-0.23px]",
  },
  {
    time: "1 time siden",
    title: "Trafikk: Kongsberg, Efteløtveien",
    text: "UP har avholdt trafikkontroll, og det er utstedt ett forenklet forelegg for å ha kjørt i 90 i 80-sonen.",
    bold: "tracking-[-0.15px]",
    body: "tracking-[-0.01px]",
  },
  {
    time: "1 time siden",
    title: "Trafikk: Kvinnherad, Fv. 500 Lyngstrandvegen",
    text: "Fører uskadet. Oppegående. Semitrailer. Tungbilberger rekvirert til kjøretøyet. Fir...",
    bold: "tracking-[-0.24px]",
    body: "tracking-[-0.135px]",
  },
  {
    time: "1 time siden",
    title: "Trafikk: Bergen, Fv. 546 Krokeidevegen Bergen Sør",
    text: "Kl. 1520-1650: Utrykningspolitiet gjennomført fartskontroll i 40-sone. 14 fore...",
    bold: "tracking-[-0.08px]",
    body: "tracking-[-0.02px]",
  },
];

const News = () => (
  <section className="h-[402px] rounded-[24px] bg-white px-3 shadow-[0_12px_24px_rgba(0,0,0,0.15)]">
    <h1 className="flex h-[72px] items-center justify-center pt-1 text-[35px] tracking-[-0.7px] text-[#0b2e48]">Nyheter</h1>
    <ul className="flex flex-col gap-[6px]">
      {NEWS.map((n, i) => (
        <li key={i} className="flex h-12 items-center rounded-[8px] bg-white px-[6px] pt-[2px] text-[23px] whitespace-nowrap text-black shadow-[0_4px_10px_rgba(0,0,0,0.12)]">
          <span className="w-[246px] shrink-0 tracking-[-0.2px]">{n.time}</span>
          <span className={n.body}>
            <strong className={`font-bold ${n.bold}`}>{n.title}</strong> - {n.text}
          </span>
        </li>
      ))}
    </ul>
  </section>
);

/* ---------- Filter ---------- */

const CheckBox = () => (
  <svg viewBox="0 0 30 30" className="h-[30px] w-[30px] shrink-0">
    <rect width="30" height="30" rx="3" fill="#0075ff" />
    <path d="M6,16.5 L12,22 L24.5,6.5" fill="none" stroke="#fff" strokeWidth="4.2" />
  </svg>
);

const Defibrillator = () => (
  <svg viewBox="0 0 108 108" className="h-9 w-9">
    <rect width="108" height="108" rx="9" fill="#00b060" />
    <path d="M54,0h45a9,9 0 0 1 9,9v90a9,9 0 0 1-9,9H54z" fill="#008a4b" />
    <path d="M54,94 L18,60 Q10,52 10,38 Q12,14 34,14 Q47,14 54,25z" fill="#e6f0f0" />
    <path d="M54,94 L90,60 Q98,52 98,38 Q96,14 74,14 Q61,14 54,25z" fill="#c4dfe4" />
    <path d="M46,30h20l-4,16h10l-22,32 4,-20h-14z" fill="#008a4b" />
  </svg>
);

const Shelter = () => (
  <svg viewBox="0 0 108 108" className="h-9 w-9">
    <path d="M54,15 Q2,18 0,75 V86 Q1,92 8,92 H54z" fill="#9c8ecb" />
    <path d="M54,15 Q106,18 108,75 V86 Q107,92 100,92 H54z" fill="#7160b5" />
    <rect x="18" y="52" width="19" height="20" fill="#5b3a5c" />
    <rect x="72" y="52" width="18" height="20" fill="#452b50" />
    <path d="M45,92V72q1-9 9-10v30z" fill="#46e35d" />
    <path d="M63,92V72q-1-9-9-10v30z" fill="#24c868" />
  </svg>
);

const MeetingPoint = () => (
  <svg viewBox="0 0 108 108" className="h-9 w-9" fill="none" stroke="#000" strokeWidth="9" strokeLinecap="round" strokeLinejoin="miter">
    <circle cx="54" cy="54" r="12" fill="#000" stroke="none" />
    <path d="M4,4 L35,34 M37,10 V36 H11" />
    <path d="M104,4 L73,34 M71,10 V36 H97" />
    <path d="M4,104 L35,74 M37,98 V72 H11" />
    <path d="M104,104 L73,74 M71,98 V72 H97" />
  </svg>
);

const Burger = () => (
  <svg viewBox="0 0 108 108" className="h-9 w-9" stroke="#1b1b1b" strokeWidth="2.5">
    <path d="M6,84 H102 Q100,106 80,107 H28 Q8,106 6,84Z" fill="#ff9a3c" />
    <path d="M3,72 H105 L107,82 L96,78 L84,84 L72,78 L60,84 L48,78 L36,84 L22,78 L3,82Z" fill="#e03a48" />
    <path d="M5,58 H103 V72 L92,76 L80,70 L68,76 L56,70 L44,76 L32,70 L14,74 L5,70Z" fill="#a8d858" />
    <path d="M5,54 H100 L90,62 H32 V86 Q32,92 27,92 Q22,92 22,86 V64 L5,60Z" fill="#ffd95a" />
    <rect x="1.5" y="40" width="105" height="15" rx="7" fill="#9c4f24" />
    <path d="M4,40 Q4,4 40,2 H68 Q104,4 104,40Z" fill="#ff9a3c" />
    <path d="M38,16l4,-2M52,13h4M66,14l4,2" stroke="#b15f12" strokeWidth="3" />
  </svg>
);

const Dot = ({ fill }: { fill: string }) => (
  <svg viewBox="0 0 36 36" className="h-9 w-9">
    <circle cx="18" cy="18" r="17.4" fill={fill} stroke="#111" strokeWidth="1" />
  </svg>
);

const FILTERS = [
  { label: "Hjertestarter", icon: <Defibrillator />, track: "tracking-[0px]" },
  { label: "Tilfluktsrom", icon: <Shelter />, track: "tracking-[0.15px]" },
  { label: "Møteplass", icon: <MeetingPoint />, track: "tracking-[0.2px]" },
  { label: "Matstasjon", icon: <Burger />, track: "tracking-[0.15px]" },
  { label: "Fare nivå 1", icon: <Dot fill="#ffee88" />, track: "tracking-[-0.1px]" },
  { label: "Fare nivå 2", icon: <Dot fill="#ff6a00" />, track: "tracking-[-0.1px]" },
];

const FilterPanel = () => (
  <aside className="h-[490px] w-[300px] shrink-0 rounded-[24px] border border-[#cfcfcf] bg-white pt-[28px] pl-6 text-[#0b2e48]">
    <h2 className="text-[26px] leading-[36px] font-bold tracking-[-0.6px]">Filter</h2>
    <ul className="mt-[20px]">
      {FILTERS.map((f) => (
        <li key={f.label} className="flex h-12 items-center">
          <CheckBox />
          <span className="ml-[18px] shrink-0">{f.icon}</span>
          <span className={`ml-[18px] pt-[3px] text-[23px] font-medium whitespace-nowrap [-webkit-text-stroke:0.35px_#0b2e48] ${f.track}`}>{f.label}</span>
        </li>
      ))}
    </ul>
  </aside>
);

const ZoomControl = () => (
  <div className="absolute top-[15px] left-[15px] flex flex-col rounded-[6px] border-3 border-black/20 bg-clip-padding">
    <button className="flex h-[45px] w-[45px] items-center justify-center rounded-t-[3px] border-b border-[#ccc] bg-white pt-[2px] pl-px">
      <svg viewBox="0 0 18 18" className="h-[18px] w-[18px]" stroke="#000" strokeWidth="2">
        <path d="M9,0V18M0,9H18" />
      </svg>
    </button>
    <button className="flex h-[45px] w-[45px] items-center justify-center rounded-b-[3px] bg-white pt-px pl-px">
      <svg viewBox="0 0 18 18" className="h-[18px] w-[18px]" stroke="#000" strokeWidth="2">
        <path d="M0,11H18" />
      </svg>
    </button>
  </div>
);

const DevToggle = () => (
  <div className="absolute top-[249px] right-0 z-20 flex h-[113px] w-[37px] flex-col items-center rounded-l-[23px] bg-[#111] pt-[23px] pl-[8px] shadow-[0_2px_10px_rgba(0,0,0,0.35)]">
    <svg viewBox="0 0 22 20" className="h-[19px] w-[21px] shrink-0">
      <path d="M0,0H4.5L11,11.5L17.5,0H22L11,19.5Z" fill="#808080" />
      <path d="M4.5,0H8.5L11,4.4L13.5,0H17.5L11,11.5Z" fill="#555" />
    </svg>
    <div className="mt-[15px] h-px w-4 bg-[#2c2c2c]" />
    <svg viewBox="0 0 24 24" className="mt-[14px] h-[24px] w-[24px] shrink-0" fill="none" stroke="#00a86b" strokeWidth="1.8" strokeLinecap="round">
      <circle cx="12" cy="12" r="8" />
      <circle cx="12" cy="12" r="1.2" fill="#00a86b" />
      <path d="M12,1.5V6M12,18V22.5M1.5,12H6M18,12H22.5" />
    </svg>
  </div>
);

export default function App() {
  return (
    <div className="relative h-[1012px] w-full overflow-hidden border-r border-[#2b2b2b] bg-[#f0f0f0] font-['Open_Sans','Noto_Sans',sans-serif]">
      <Header />
      <main className="mx-auto flex w-[1704px] flex-col gap-3 pt-3">
        <News />
        <div className="flex gap-3">
          <FilterPanel />
          <div className="relative h-[466px] flex-1 overflow-hidden rounded-t-[24px]">
            <CityMap />
            <ZoomControl />
          </div>
        </div>
      </main>
      <DevToggle />
    </div>
  );
}
